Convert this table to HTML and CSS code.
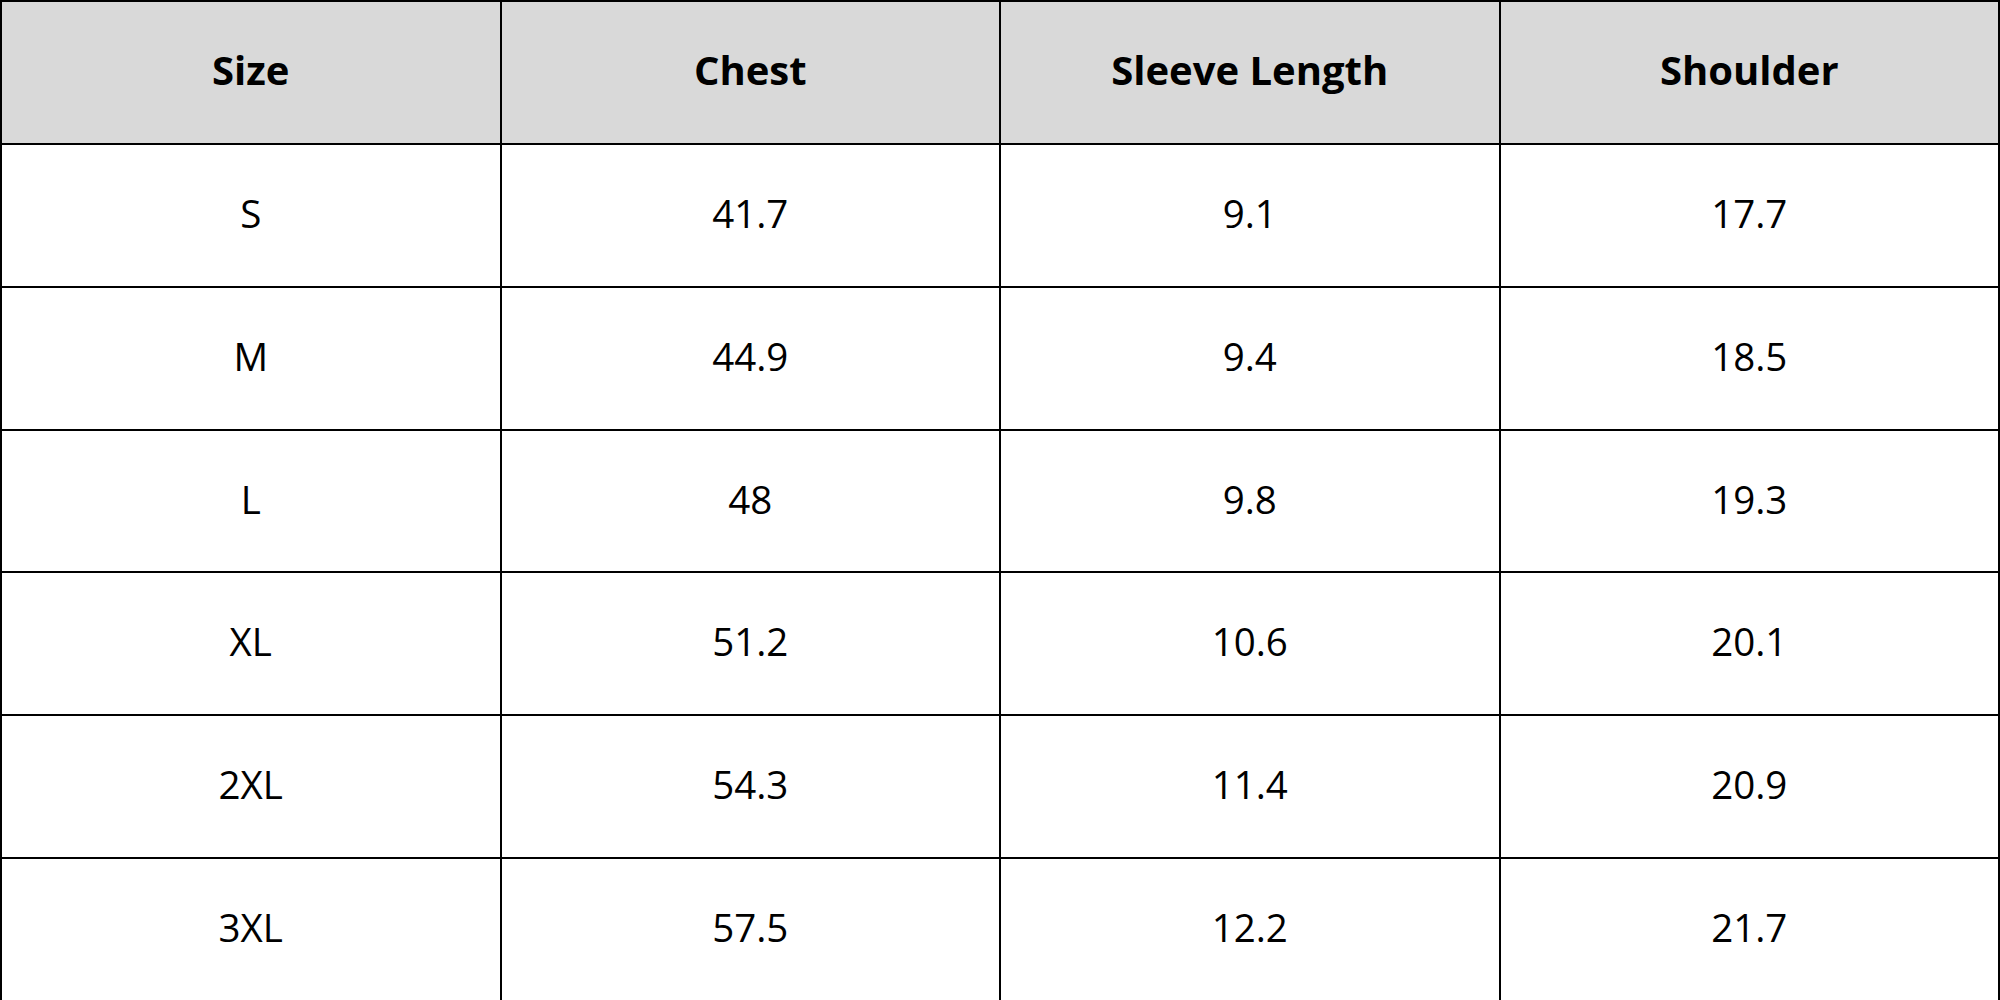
FILE: index.html
```html
<!DOCTYPE html>
<html>
<head>
<meta charset="utf-8">
<link rel="stylesheet" href="styles.css">
</head>
<body>
<table class="size-table">
  <thead>
    <tr><th>Size</th><th>Chest</th><th>Sleeve Length</th><th>Shoulder</th></tr>
  </thead>
  <tbody>
    <tr><td>S</td><td>41.7</td><td>9.1</td><td>17.7</td></tr>
    <tr><td>M</td><td>44.9</td><td>9.4</td><td>18.5</td></tr>
    <tr><td>L</td><td>48</td><td>9.8</td><td>19.3</td></tr>
    <tr><td>XL</td><td>51.2</td><td>10.6</td><td>20.1</td></tr>
    <tr><td>2XL</td><td>54.3</td><td>11.4</td><td>20.9</td></tr>
    <tr><td>3XL</td><td>57.5</td><td>12.2</td><td>21.7</td></tr>
  </tbody>
</table>
</body>
</html>
```
FILE: styles.css
```css
html, body {
  margin: 0;
  padding: 0;
  background: #ffffff;
}
.size-table {
  width: 2000px;
  height: 1000px;
  border-collapse: collapse;
  table-layout: fixed;
  font-family: "Open Sans", "Noto Sans", sans-serif;
  color: #000;
}
.size-table th,
.size-table td {
  border: 2px solid #000;
  text-align: center;
  vertical-align: middle;
  padding: 0 0 5px 0;
  width: 25%;
  height: 135.86px;
}
.size-table th {
  background: #d9d9d9;
  font-weight: 700;
  font-size: 40px;
}
.size-table td {
  font-weight: 400;
  font-size: 38.5px;
}
```
